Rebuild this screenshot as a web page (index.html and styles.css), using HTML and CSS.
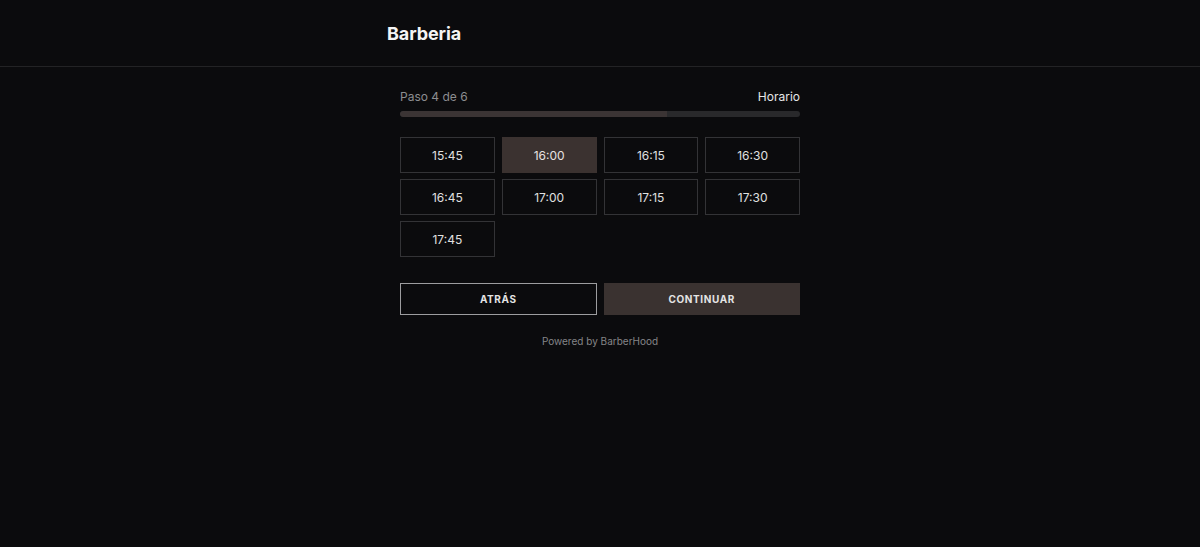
FILE: index.html
```html
<!DOCTYPE html>
<html lang="es">
<head>
<meta charset="utf-8">
<title>Barberia</title>
<link rel="stylesheet" href="styles.css">
</head>
<body>
<header class="topbar">
  <div class="topbar-inner">
    <span class="brand">Barberia</span>
  </div>
</header>
<main class="booking">
  <div class="step-head">
    <span class="step-count">Paso 4 de 6</span>
    <span class="step-name">Horario</span>
  </div>
  <div class="progress"><div class="progress-fill" style="width: 66.67%"></div></div>

  <div class="slots">
    <button class="slot">15:45</button>
    <button class="slot is-selected">16:00</button>
    <button class="slot">16:15</button>
    <button class="slot">16:30</button>
    <button class="slot">16:45</button>
    <button class="slot">17:00</button>
    <button class="slot">17:15</button>
    <button class="slot">17:30</button>
    <button class="slot">17:45</button>
  </div>

  <div class="actions">
    <button class="btn btn-back">ATRÁS</button>
    <button class="btn btn-next">CONTINUAR</button>
  </div>

  <p class="powered">Powered by BarberHood</p>
</main>
</body>
</html>
```

FILE: styles.css
```css
* { box-sizing: border-box; }

html, body {
  margin: 0;
  background: #0b0b0d;
  color: #e8e8e8;
  font-family: Inter, "Liberation Sans", Arial, sans-serif;
}

.topbar {
  height: 67px;
  border-bottom: 1px solid #232325;
}

.topbar-inner {
  width: 426px;
  margin: 0 auto;
  padding-top: 23px;
}

.brand {
  font-size: 18px;
  font-weight: 700;
  color: #f4f4f4;
  letter-spacing: -0.1px;
}

.booking {
  width: 400px;
  margin: 0 auto;
  padding-top: 22px;
}

.step-head {
  display: flex;
  justify-content: space-between;
  align-items: baseline;
  font-size: 12px;
  line-height: 15px;
}

.step-count { color: #8d8d90; }
.step-name { color: #e6e6e6; }

.progress {
  margin-top: 7px;
  height: 6px;
  border-radius: 3px;
  background: #29292b;
  overflow: hidden;
}

.progress-fill {
  height: 100%;
  background: #3b3434;
  border-radius: 3px 0 0 3px;
}

.slots {
  margin-top: 20px;
  display: grid;
  grid-template-columns: repeat(4, 1fr);
  gap: 6px 7px;
}

.slot {
  height: 36px;
  background: #0b0b0d;
  border: 1px solid #333336;
  color: #e0e0e0;
  font-family: inherit;
  font-size: 12px;
  padding: 0;
}

.slot.is-selected {
  background: #3b3230;
  border-color: #3b3230;
  color: #e8e2e0;
}

.actions {
  margin-top: 26px;
  display: grid;
  grid-template-columns: 1fr 1fr;
  gap: 7px;
}

.btn {
  height: 32px;
  font-family: inherit;
  font-size: 10px;
  font-weight: 700;
  letter-spacing: 0.6px;
  color: #e4e4e4;
  padding: 0;
}

.btn-back {
  background: #0b0b0d;
  border: 1.5px solid #9d9d9f;
}

.btn-next {
  background: #3a3230;
  border: 1px solid #3a3230;
}

.powered {
  margin: 20px 0 0;
  text-align: center;
  font-size: 10px;
  color: #858588;
}
```
